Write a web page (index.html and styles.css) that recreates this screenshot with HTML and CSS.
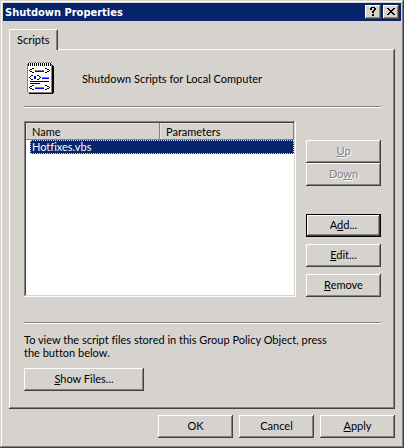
FILE: index.html
```html
<!DOCTYPE html>
<html lang="en">
<head>
  <meta charset="UTF-8" />
  <meta name="viewport" content="width=device-width, initial-scale=1.0"/>
  <title>Shutdown Properties</title>
  <link rel="stylesheet" href="styles.css">
</head>
<body>

  <main class="window">
    <header class="titlebar">
      <h1>Shutdown Properties</h1>
      <button type="button" class="caption-btn" aria-label="Help">
        <svg width="6" height="9" viewBox="0 0 6 9" shape-rendering="crispEdges">
          <path d="M1 0h4v1h-4zM0 1h2v2h-2zM4 1h2v2h-2zM3 3h2v1h-2zM2 4h2v2h-2zM2 7h2v2h-2z"/>
        </svg>
      </button>
      <button type="button" class="caption-btn" aria-label="Close">
        <svg width="8" height="7" viewBox="0 0 8 7" shape-rendering="crispEdges">
          <path d="M0 0h2v1h-2zM6 0h2v1h-2zM1 1h2v1h-2zM5 1h2v1h-2zM2 2h4v1h-4zM3 3h2v1h-2zM2 4h4v1h-4zM1 5h2v1h-2zM5 5h2v1h-2zM0 6h2v1h-2zM6 6h2v1h-2z"/>
        </svg>
      </button>
    </header>

    <div class="content">
      <div class="tabs" role="tablist">
        <button type="button" class="tab" role="tab" id="scripts-tab" aria-selected="true" aria-controls="scripts">Scripts</button>
      </div>

      <section class="panel" role="tabpanel" id="scripts" aria-labelledby="scripts-tab">
        <div class="intro">
          <!-- notepad with script tags -->
          <svg class="script-icon" width="32" height="32" viewBox="0 0 32 32" shape-rendering="crispEdges" aria-hidden="true">
            <path fill="#fff" d="M1 1h23v29h-23z"/>
            <path fill="#848284" d="M0 2h1v28h-1zM1 30h24v1h-24zM24 2h1v28h-1z"/>
            <path fill="#000" d="M25 3h1v29h-1zM26 4h1v27h-1zM2 31h24v1h-24z"/>
            <path stroke="#000" stroke-width="3" stroke-dasharray="1 1" d="M1 2.5h24"/>
            <path stroke="#848284" stroke-dasharray="1 1" d="M2 .5h23"/>
            <path fill="#000" d="M5 6h2v1h-2zM3 7h2v1h-2zM2 8h1v1h-1zM3 9h2v1h-2zM5 10h2v1h-2zM18 6h2v1h-2zM20 7h2v1h-2zM22 8h1v1h-1zM20 9h2v1h-2zM18 10h2v1h-2z"/>
            <path fill="#000" d="M4 13h2v1h-2zM3 14h1v1h-1zM2 15h1v1h-1zM3 16h1v1h-1zM4 17h2v1h-2zM10 13h2v1h-2zM12 14h1v1h-1zM13 15h1v1h-1zM12 16h1v1h-1zM10 17h2v1h-2z"/>
            <path fill="#000" d="M5 23h2v1h-2zM3 24h2v1h-2zM2 25h1v1h-1zM3 26h2v1h-2zM5 27h2v1h-2zM18 23h2v1h-2zM20 24h2v1h-2zM22 25h1v1h-1zM20 26h2v1h-2zM18 27h2v1h-2z"/>
            <path fill="#848284" d="M8 8h9v1h-9zM15 15h7v1h-7zM8 25h9v1h-9z"/>
            <path fill="#00f" d="M8 9h9v1h-9zM7 14h2v3h-2zM15 16h7v1h-7zM8 26h9v1h-9z"/>
            <path fill="#000" d="M3 19h19v1h-19zM3 21h10v1h-10z"/>
          </svg>
          <p>Shutdown Scripts for Local Computer</p>
        </div>

        <hr />

        <div class="scripts">
          <div class="list">
            <table>
              <thead>
                <tr><th>Name</th><th>Parameters</th></tr>
              </thead>
              <tbody>
                <tr><td colspan="2"><div class="selected">Hotfixes.vbs</div></td></tr>
              </tbody>
            </table>
          </div>
          <div class="actions">
            <div class="order">
              <button type="button" class="btn" disabled><u>U</u>p</button>
              <button type="button" class="btn" disabled>Do<u>w</u>n</button>
            </div>
            <div class="edit">
              <button type="button" class="btn default">A<u>d</u>d...</button>
              <button type="button" class="btn"><u>E</u>dit...</button>
              <button type="button" class="btn"><u>R</u>emove</button>
            </div>
          </div>
        </div>

        <hr />

        <p class="note">To view the script files stored in this Group Policy Object, press the button below.</p>
        <button type="button" class="btn wide"><u>S</u>how Files...</button>
      </section>

      <footer class="buttons">
        <button type="button" class="btn">OK</button>
        <button type="button" class="btn">Cancel</button>
        <button type="button" class="btn"><u>A</u>pply</button>
      </footer>
    </div>
  </main>

</body>
</html>
```

FILE: styles.css
```css
* {
  box-sizing: border-box;
}
body {
  margin: 0;
  background: #d6d3ce;
  color: #000;
  font-family: Lato, Tahoma, sans-serif;
  font-size: 11px;
  font-variant-ligatures: none;
  line-height: 13px;
}
h1, p {
  margin: 0;
}
button {
  font: inherit;
  color: inherit;
  background: #d6d3ce;
  border: none;
  border-radius: 0;
  padding: 0;
}
u {
  text-underline-offset: 1px;
  text-decoration-thickness: 1px;
  text-decoration-skip-ink: none;
}
.window {
  min-height: 100vh;
  padding: 3px;
  box-shadow: inset -1px -1px #424142, inset 1px 1px #d6d3ce, inset -2px -2px #848284, inset 2px 2px #fff;
}

/* title bar */
.titlebar {
  display: flex;
  align-items: center;
  gap: 2px;
  height: 18px;
  padding: 0 2px;
  background: #08246b;
}
.titlebar h1 {
  flex: 1;
  color: #fff;
  font-family: "DejaVu Sans Condensed", Tahoma, sans-serif;
  font-size: 11px;
  font-weight: bold;
}
.caption-btn {
  display: flex;
  align-items: center;
  justify-content: center;
  width: 16px;
  height: 14px;
  padding: 0 1px 1px 0;
  box-shadow: inset -1px -1px #424142, inset 1px 1px #fff, inset -2px -2px #848284;
}

/* tab and its page */
.content {
  padding: 8px 6px 6px;
}
.tabs {
  display: flex;
}
.tab {
  position: relative;
  height: 21px;
  margin-bottom: -1px;
  padding: 0 7px 2px;
  border-left: 1px solid #fff;
  border-top: 1px solid #fff;
  border-right: 1px solid #424142;
  border-radius: 2px 2px 0 0;
  box-shadow: inset -1px 0 #848284;
}
.panel {
  padding: 11px 14px 18px 15px;
  box-shadow: inset -1px -1px #424142, inset 1px 1px #fff, inset -2px -2px #848284;
}
.intro {
  display: flex;
  align-items: center;
  gap: 23px;
  padding: 2px 0 12px 3px;
}
hr {
  height: 2px;
  margin: 0;
  border: none;
  border-top: 1px solid #848284;
  border-bottom: 1px solid #fff;
}

/* script list */
.scripts {
  display: flex;
  gap: 10px;
  margin: 13px 0 25px;
}
.list {
  flex: 1;
  min-height: 176px;
  padding: 2px;
  background: #fff;
  box-shadow: inset -1px -1px #fff, inset 1px 1px #848284, inset -2px -2px #d6d3ce, inset 2px 2px #424142;
}
table {
  width: 100%;
  table-layout: fixed;
  border-collapse: collapse;
}
th {
  height: 17px;
  padding: 0 6px;
  background: #d6d3ce;
  box-shadow: inset -1px -1px #848284, inset 1px 1px #e7e3de;
  font-weight: normal;
  text-align: left;
}
td {
  padding: 0 0 0 4px;
}
.selected {
  height: 14px;
  padding: 0 1px;
  border: 1px dotted #f7db94;
  background: #08246b;
  color: #fff;
  line-height: 12px;
}
.actions {
  display: flex;
  flex-direction: column;
  justify-content: space-between;
  padding-top: 19px;
}
.order, .edit {
  display: flex;
  flex-direction: column;
}
.edit {
  gap: 7px;
}

/* push buttons */
.btn {
  width: 75px;
  height: 23px;
  padding-bottom: 2px;
  box-shadow: inset -1px -1px #424142, inset 1px 1px #fff, inset -2px -2px #848284;
}
.btn.default {
  border: 1px solid #000;
}
.btn:disabled {
  color: #848284;
  text-shadow: 1px 1px #fff;
}
.btn.wide {
  width: 120px;
}
.note {
  max-width: 310px;
  margin: 9px 0;
}
.buttons {
  display: flex;
  justify-content: flex-end;
  gap: 6px;
  margin-top: 6px;
}
```
